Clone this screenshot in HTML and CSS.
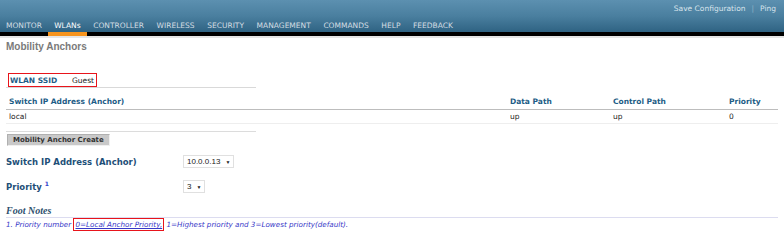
FILE: index.html
```html
<!DOCTYPE html>
<html>
<head>
<meta charset="utf-8">
<link rel="stylesheet" href="styles.css">
</head>
<body>
<div class="header">
  <div class="util">
    <span>Save Configuration</span><span class="sep">|</span><span>Ping</span>
  </div>
  <nav class="nav">
    <span class="item">MONITOR</span>
    <span class="item active">WLANs</span>
    <span class="item">CONTROLLER</span>
    <span class="item">WIRELESS</span>
    <span class="item">SECURITY</span>
    <span class="item">MANAGEMENT</span>
    <span class="item">COMMANDS</span>
    <span class="item">HELP</span>
    <span class="item">FEEDBACK</span>
  </nav>
</div>
<div class="bar"><div class="bar-active"></div></div>
<div class="content">
  <h1 class="title">Mobility Anchors</h1>
  <div class="ssid">
    <span class="ssid-box"><span class="lbl">WLAN SSID</span><span class="val">Guest</span></span>
  </div>
  <div class="table">
    <div class="row head">
      <span class="c1">Switch IP Address (Anchor)</span>
      <span class="c2">Data Path</span>
      <span class="c3">Control Path</span>
      <span class="c4">Priority</span>
    </div>
    <div class="row body">
      <span class="c1">local</span>
      <span class="c2">up</span>
      <span class="c3">up</span>
      <span class="c4">0</span>
    </div>
  </div>
  <div class="create">
    <span class="btn">Mobility Anchor Create</span>
  </div>
  <div class="form-row first">
    <span class="flabel">Switch IP Address (Anchor)</span>
    <span class="sel">10.0.0.13 <span class="arrow">&#9660;</span></span>
  </div>
  <div class="form-row">
    <span class="flabel">Priority <sup class="fn">1</sup></span>
    <span class="sel">3 <span class="arrow">&#9660;</span></span>
  </div>
  <div class="foot-title">Foot Notes</div>
  <div class="foot-text">1. Priority number <span class="hl">0=Local Anchor Priority,</span> 1=Highest priority and 3=Lowest priority(default).</div>
</div>
</body>
</html>
```
FILE: styles.css
```css
html, body { margin: 0; padding: 0; background: #fff; }
body { font-family: "DejaVu Sans", Verdana, sans-serif; width: 784px; height: 240px; overflow: hidden; }
.header {
  height: 32px;
  background: linear-gradient(#5c90b0 0%, #4a7f9f 50%, #2f6383 100%);
}
.util {
  display: flex; justify-content: flex-end; align-items: center;
  height: 16px; padding-right: 8px;
  font-size: 7.5px; color: #d8e4ec;
}
.util .sep { color: #8fb0c6; margin: 0 6px; }
.nav { display: flex; height: 16px; align-items: center; padding-top: 1px; }
.nav .item { font-size: 7.5px; color: #d4dde3; padding: 0 6.3px; }
.nav .item:first-child { padding-left: 6px; padding-right: 6px; }
.nav .item.active { color: #fff; }
.bar { height: 4px; background: #000; position: relative; border-bottom: 2px solid #e6e6e6; }
.bar-active { position: absolute; left: 48px; width: 39px; top: 0; height: 4px; background: #f7941d; }
.content { padding: 0 6px; }
.title { margin: 0; padding-top: 2px; height: 33px; font-size: 10px; font-weight: bold; color: #7a7a7a; font-family: "Liberation Sans", Arial, sans-serif; line-height: 14px; }
.ssid { display: flex; width: 250px; border-bottom: 1px solid #d9d9d9; }
.ssid-box { display: flex; align-items: center; border: 1px solid #e8141b; height: 12px; margin-left: 2px; padding: 0 2px 0 1px; width: 84px; font-size: 7.5px; }
.ssid-box .lbl { color: #1d5d86; font-weight: bold; width: 62px; }
.ssid-box .val { color: #222; }
.table { width: 772px; margin-top: 6px; font-size: 7.5px; }
.row { display: flex; align-items: center; }
.row.head { border-bottom: 1px solid #bdbdbd; color: #1d5d86; font-weight: bold; height: 15px; }
.row.body { border-bottom: 1px solid #eeeeee; color: #222; height: 13px; }
.c1 { width: 501px; padding-left: 3px; }
.c2 { width: 103px; }
.c3 { width: 116px; }
.c4 { width: 46px; }
.create { display: flex; width: 250px; border-top: 1px solid #dcdcdc; margin-top: 7px; padding-top: 2px; }
.btn { display: inline-block; margin-left: 1px; background: #c9c9c9; border: 1px solid #b0b0b0; border-right-color: #f0f0f0; border-bottom-color: #f0f0f0; font-size: 7px; font-weight: bold; color: #333; padding: 0 5px; height: 10px; line-height: 10px; white-space: nowrap; }
.form-row { display: flex; align-items: center; height: 25px; }
.form-row.first { margin-top: 3px; }
.flabel { width: 177px; font-size: 8.5px; font-weight: bold; color: #1e4f78; }
.fn { font-size: 6px; color: #3344cc; vertical-align: 4px; line-height: 0; }
.sel { display: inline-flex; align-items: center; border: 1px solid #e0e0e0; height: 11px; padding: 0 3px; font-size: 8px; color: #222; font-family: "Liberation Sans", Arial, sans-serif; }
.sel .arrow { font-size: 5px; margin-left: 5px; color: #222; }
.foot-title { font-family: "Liberation Serif", serif; font-style: italic; font-weight: bold; font-size: 10px; line-height: 13px; color: #2d4f6e; border-bottom: 1px solid #dcdcf0; margin-top: 5px; width: 772px; }
.foot-text { font-style: italic; font-size: 7.2px; line-height: 10px; color: #3838c8; margin-top: 2px; white-space: nowrap; }
.hl { border: 1px solid #e8141b; padding: 1px 1px; text-decoration: underline; }
```
